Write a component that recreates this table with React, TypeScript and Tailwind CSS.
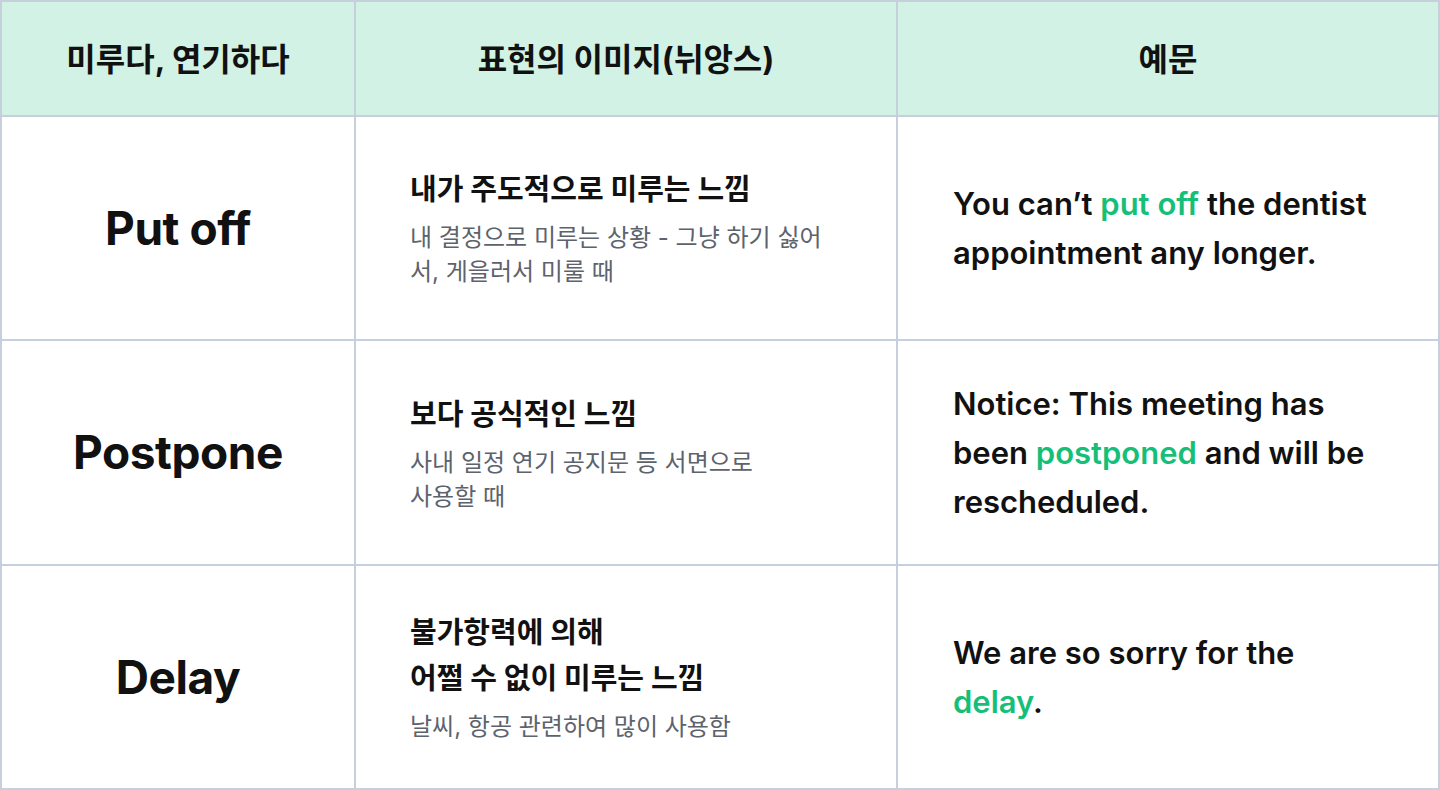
const font = "font-['Inter','Noto_Sans_CJK_KR',sans-serif]";

type Row = {
  word: string;
  title: string[];
  desc: string[];
  example: React.ReactNode;
};

const rows: Row[] = [
  {
    word: "Put off",
    title: ["내가 주도적으로 미루는 느낌"],
    desc: ["내 결정으로 미루는 상황 - 그냥 하기 싫어", "서, 게을러서 미룰 때"],
    example: (
      <>
        You can’t <span className="text-[#16bf78]">put off</span> the dentist
        <br />
        appointment any longer.
      </>
    ),
  },
  {
    word: "Postpone",
    title: ["보다 공식적인 느낌"],
    desc: ["사내 일정 연기 공지문 등 서면으로", "사용할 때"],
    example: (
      <>
        Notice: This meeting has
        <br />
        been <span className="text-[#16bf78]">postponed</span> and will be
        <br />
        rescheduled.
      </>
    ),
  },
  {
    word: "Delay",
    title: ["불가항력에 의해", "어쩔 수 없이 미루는 느낌"],
    desc: ["날씨, 항공 관련하여 많이 사용함"],
    example: (
      <>
        We are so sorry for the
        <br />
        <span className="text-[#16bf78]">delay</span>.
      </>
    ),
  },
];

const cell = "border-r-2 border-b-2 border-[#c6d0dc]";

export default function App() {
  return (
    <div className={`${font} h-[790px] w-[1440px] bg-white text-[#111111]`}>
      <div className="grid h-full grid-cols-[354px_542px_1fr] grid-rows-[115px_224px_225px_224px] border-l-2 border-t-2 border-[#c6d0dc]">
        {["미루다, 연기하다", "표현의 이미지(뉘앙스)", "예문"].map((h) => (
          <div
            key={h}
            className={`${cell} flex items-center justify-center bg-[#d1f2e4] pt-[2px] text-[32px] font-bold`}
          >
            {h}
          </div>
        ))}
        {rows.map((r) => (
          <div key={r.word} className="contents">
            <div className={`${cell} flex items-center justify-center text-[46px] font-bold tracking-[-0.01em]`}>
              {r.word}
            </div>
            <div className={`${cell} flex flex-col justify-center pl-[54px]`}>
              <div className="text-[29px] font-bold leading-[46px] whitespace-nowrap">
                {r.title.map((t) => (
                  <div key={t}>{t}</div>
                ))}
              </div>
              <div className="mt-[8px] text-[24px] leading-[34px] text-[#5c636d] whitespace-nowrap">
                {r.desc.map((t) => (
                  <div key={t}>{t}</div>
                ))}
              </div>
            </div>
            <div className={`${cell} flex items-center pl-[55px] text-[31px] font-semibold leading-[49px]`}>
              <p>{r.example}</p>
            </div>
          </div>
        ))}
      </div>
    </div>
  );
}
